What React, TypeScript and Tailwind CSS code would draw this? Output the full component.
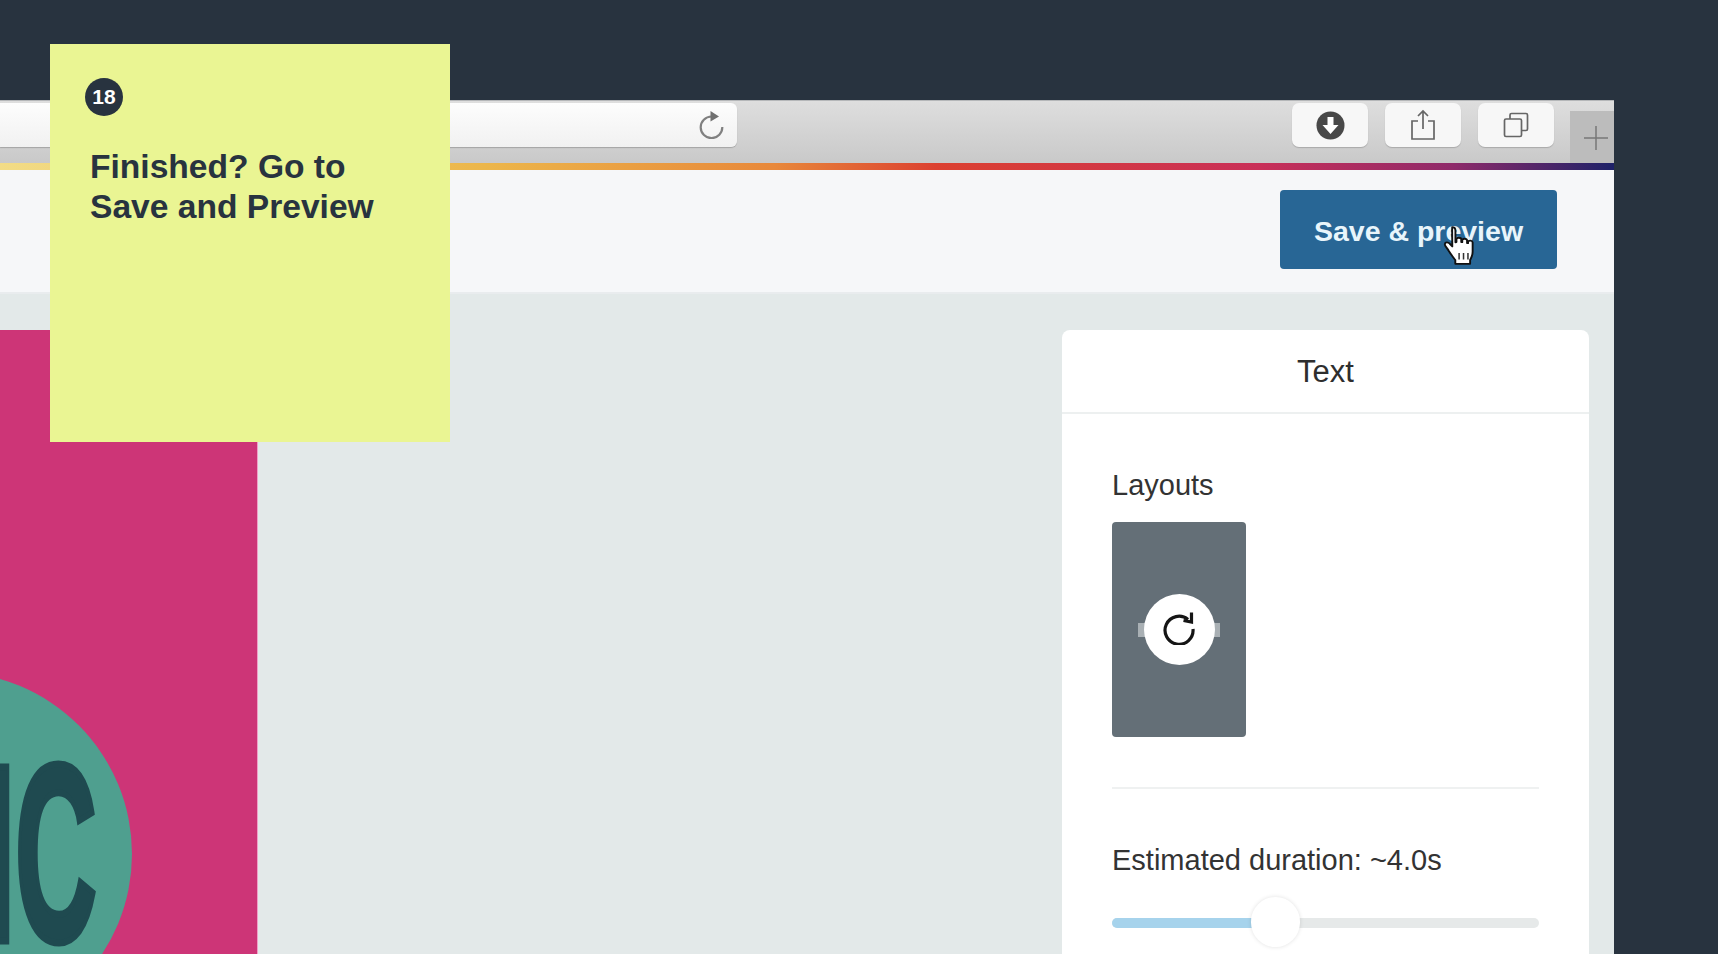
import React from 'react';

const ToolbarButton: React.FC<{ children: React.ReactNode }> = ({ children }) => (
  <div className="w-[76px] h-[44px] bg-[#f7f7f7] rounded-[7px] shadow-[0_1px_1px_rgba(0,0,0,0.18)] flex items-center justify-center">
    {children}
  </div>
);

const BrowserReload = () => (
  <svg viewBox="0 0 26 28" className="w-[26px] h-[28px]" fill="none">
    <path d="M12.500 5.500A10.800 10.800 0 1 0 23.300 16" stroke="#808080" strokeWidth="2.200" />
    <path d="M11.500 0L20 5.500 11.500 10.500z" fill="#707070" />
  </svg>
);

const LayoutReload = () => (
  <svg viewBox="0 0 34 36" className="w-[34px] h-[36px] mb-[5px]" fill="none" stroke="#151515" strokeWidth="3.200">
    <path d="M26 10.500A14 14 0 1 0 31 20" />
    <path d="M21.500 11.500l8 1.500V3.500" />
  </svg>
);

const HandCursor = () => (
  <svg viewBox="0 0 30 34" className="w-[38px] h-[43px]">
    <path
      d="M8 2.500c1.600 0 2.600 1.200 2.600 2.800v9.200l.8-.2V12c0-1.500 3.600-1.600 3.800 0v2.200l.8.1v-1.500c0-1.500 3.600-1.500 3.800.2v2l.8.1v-.9c.2-1.500 3.400-1.400 3.600.3v7.500c0 3-1 4.600-2 6.500v3H10.500v-3c-1.500-2-3-3.800-5-7-1.400-2.400-3.600-4.300-3.300-5.700.3-1.700 2.700-1.600 3.900-.2l2 2.100-.1-12.500c0-1.600.1-2.700 0-2.700z"
      fill="#fff"
      stroke="#111"
      strokeWidth="1.500"
      strokeLinejoin="round"
    />
    <path d="M13.500 23v5M17 23v5M20.500 23v5" stroke="#333" strokeWidth="1.200" />
  </svg>
);

export default function App() {
  return (
    <div className="relative w-[1718px] h-[954px] overflow-hidden bg-[#28333f] font-['Liberation_Sans',Arial,sans-serif] pt-[100px]">
      <div className="w-[1614px] h-[854px] flex flex-col">
        {/* Browser toolbar */}
        <div className="h-[63px] shrink-0 flex bg-gradient-to-b from-[#dedede] to-[#c9c9c9] border-t border-[#b5b7b9] pt-[2px]">
          <div className="w-[737px] h-[44px] bg-gradient-to-b from-[#fdfdfd] to-[#f1f1f1] rounded-r-[6px] shadow-[0_1px_1px_rgba(0,0,0,0.2)] flex items-center justify-end pr-[12px]">
            <BrowserReload />
          </div>
          <div className="ml-auto flex gap-[17px]">
            <ToolbarButton>
              <svg viewBox="0 0 29 29" className="w-[29px] h-[29px]">
                <circle cx="14.500" cy="14.500" r="14" fill="#484848" />
                <path d="M11.500 6h6v8h5l-8 9-8-9h5z" fill="#fff" />
              </svg>
            </ToolbarButton>
            <ToolbarButton>
              <svg viewBox="0 0 26 32" className="w-[26px] h-[32px]" fill="none" stroke="#666" strokeWidth="1.700">
                <path d="M8 12H2v18h22V12h-6" />
                <path d="M13 20V2M8 7l5-5 5 5" />
              </svg>
            </ToolbarButton>
            <ToolbarButton>
              <svg viewBox="0 0 26 26" className="w-[26px] h-[26px]" fill="none" stroke="#666" strokeWidth="1.700">
                <rect x="1.500" y="7" width="17" height="17.500" rx="1.500" />
                <path d="M7 7V3a1.500 1.500 0 0 1 1.500-1.500H23a1.500 1.500 0 0 1 1.500 1.500v14a1.500 1.500 0 0 1-1.500 1.500h-4.500" />
              </svg>
            </ToolbarButton>
          </div>
          <div className="ml-[16px] w-[44px] h-[52px] self-end bg-[#bcbcbc] flex items-center justify-center pl-[8px] pt-[2px]">
            <svg viewBox="0 0 24 24" className="w-[24px] h-[24px]" stroke="#777" strokeWidth="1.500">
              <path d="M12 0v24M0 12h24" />
            </svg>
          </div>
        </div>
        {/* Brand stripe */}
        <div className="h-[7px] shrink-0 bg-[linear-gradient(90deg,#f2dc86_0%,#ecb64a_30%,#e8883a_48%,#dc4030_58%,#c92f58_78%,#8f2a6a_90%,#1e2268_100%)]" />
        {/* App header */}
        <div className="h-[124px] shrink-0 bg-[#f6f7f9] border-b-2 border-[#e9ecee] flex items-start justify-end pr-[57px] pt-[20px]">
          <button className="relative w-[277px] h-[79px] bg-[#286695] rounded-[4px] text-[#e8f5fb] text-[28.500px] font-bold flex items-center justify-center pt-[3px]">
            Save &amp; preview
            <span className="absolute left-[162px] top-[34px]">
              <HandCursor />
            </span>
          </button>
        </div>
        {/* Editor */}
        <div className="flex-1 min-h-0 bg-[#e3e9e9] flex justify-between pt-[36px] pr-[25px]">
          <div className="relative w-[258px] bg-[#cd3577] overflow-hidden border-r border-[#f0a0c8]">
            <div className="absolute left-[-232px] top-[342px] w-[364px] h-[364px] rounded-full bg-[#4f9f8f] overflow-hidden">
              <span className="absolute left-[-171px] top-[-8px] w-[500px] text-right origin-right scale-x-[0.45] text-[#1f4a50] text-[252px] leading-[380px] font-bold [-webkit-text-stroke:7px_#1f4a50]">
                MC
              </span>
            </div>
          </div>
          <div className="w-[527px] bg-white rounded-t-[8px]">
            <div className="h-[84px] border-b-2 border-[#edf0f0] flex items-center justify-center text-[31px] text-[#2e2e2e] pt-[2px]">
              Text
            </div>
            <div className="px-[50px]">
              <div className="mt-[53px] text-[29px] leading-[36px] text-[#333]">Layouts</div>
              <div className="mt-[19px] relative w-[134px] h-[215px] bg-[#646f77] rounded-[4px] flex items-center justify-center">
                <div className="absolute left-[26px] top-[101px] w-[82px] h-[14px] bg-[#a9b0b4]" />
                <div className="relative w-[71px] h-[71px] rounded-full bg-white flex items-center justify-center">
                  <LayoutReload />
                </div>
              </div>
              <div className="mt-[50px] h-[2px] bg-[#eff1f1]" />
              <div className="mt-[53px] text-[29px] leading-[36px] text-[#333]">Estimated duration: ~4.0s</div>
              <div className="relative mt-[40px] h-[10px] rounded-full bg-[#e6e9e9]">
                <div className="h-full w-[150px] rounded-l-full bg-[#a6d3ec]" />
                <div className="absolute left-[139px] top-[-21px] w-[49px] h-[50px] rounded-full bg-white shadow-[0_0_4px_rgba(0,0,0,0.12)]" />
              </div>
            </div>
          </div>
        </div>
      </div>
      {/* Step note */}
      <div className="absolute left-[50px] top-[44px] w-[400px] h-[398px] bg-[#eaf593] pl-[35px] pt-[34px]">
        <div className="w-[38px] h-[38px] rounded-full bg-[#28333f] text-white text-[21px] font-bold flex items-center justify-center">18</div>
        <div className="mt-[31px] ml-[5px] text-[33.600px] leading-[40px] font-bold text-[#28333f]">
          Finished? Go to
          <br />
          Save and Preview
        </div>
      </div>
    </div>
  );
}
